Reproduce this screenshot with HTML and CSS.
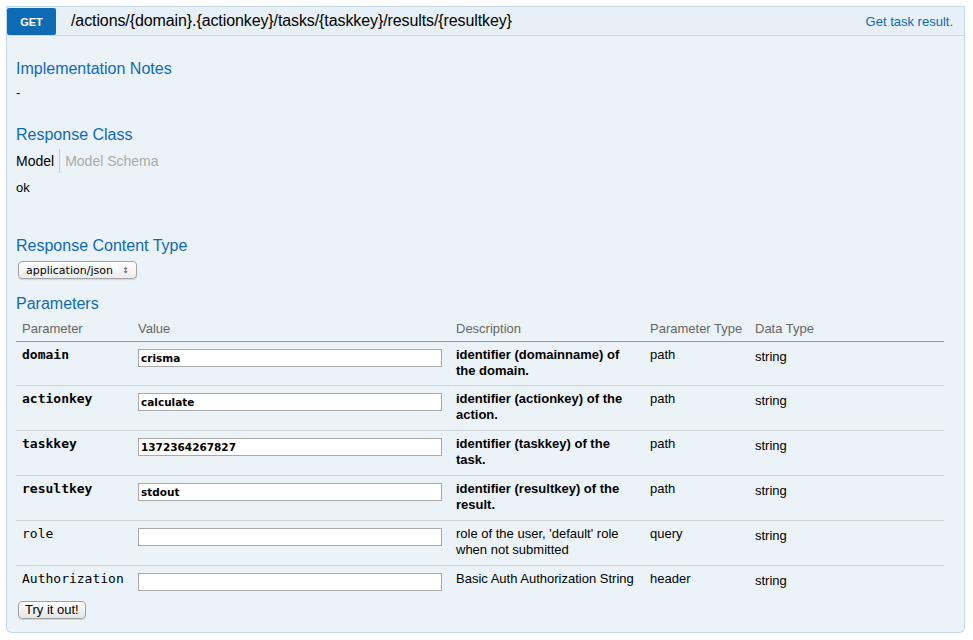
FILE: index.html
```html
<!DOCTYPE html>
<html>
<head>
<meta charset="utf-8">
<link rel="stylesheet" href="styles.css">
</head>
<body>
<div class="operation">
  <div class="heading">
    <span class="verb">GET</span>
    <span class="path">/actions/{domain}.{actionkey}/tasks/{taskkey}/results/{resultkey}</span>
    <span class="summary">Get task result.</span>
  </div>
  <div class="content">
    <h4 class="h-notes">Implementation Notes</h4>
    <p class="notes">-</p>
    <h4 class="h-class">Response Class</h4>
    <div class="tabs">
      <span class="tab active">Model</span>
      <span class="tab inactive">Model Schema</span>
    </div>
    <p class="model">ok</p>
    <h4 class="h-ctype">Response Content Type</h4>
    <div class="select"><span>application/json</span><span class="arrows">&#x2195;</span></div>
    <h4 class="h-params">Parameters</h4>
    <table class="params">
      <colgroup>
        <col class="c1"><col class="c2"><col class="c3"><col class="c4"><col class="c5">
      </colgroup>
      <thead>
        <tr><th>Parameter</th><th>Value</th><th>Description</th><th>Parameter Type</th><th>Data Type</th></tr>
      </thead>
      <tbody>
        <tr class="first">
          <td class="name req">domain</td>
          <td><div class="input">crisma</div></td>
          <td class="desc req">identifier (domainname) of the domain.</td>
          <td class="ptype">path</td>
          <td class="dtype">string</td>
        </tr>
        <tr>
          <td class="name req">actionkey</td>
          <td><div class="input">calculate</div></td>
          <td class="desc req">identifier (actionkey) of the action.</td>
          <td class="ptype">path</td>
          <td class="dtype">string</td>
        </tr>
        <tr>
          <td class="name req">taskkey</td>
          <td><div class="input">1372364267827</div></td>
          <td class="desc req">identifier (taskkey) of the task.</td>
          <td class="ptype">path</td>
          <td class="dtype">string</td>
        </tr>
        <tr>
          <td class="name req">resultkey</td>
          <td><div class="input">stdout</div></td>
          <td class="desc req">identifier (resultkey) of the result.</td>
          <td class="ptype">path</td>
          <td class="dtype">string</td>
        </tr>
        <tr>
          <td class="name">role</td>
          <td><div class="input"></div></td>
          <td class="desc">role of the user, 'default' role when not submitted</td>
          <td class="ptype">query</td>
          <td class="dtype">string</td>
        </tr>
        <tr class="last">
          <td class="name">Authorization</td>
          <td><div class="input"></div></td>
          <td class="desc">Basic Auth Authorization String</td>
          <td class="ptype">header</td>
          <td class="dtype">string</td>
        </tr>
      </tbody>
    </table>
    <div class="button">Try it out!</div>
  </div>
</div>
</body>
</html>
```

FILE: styles.css
```css
html, body {
  margin: 0;
  padding: 0;
  background: #ffffff;
}
body {
  font-family: "Liberation Sans", Arial, sans-serif;
  font-size: 13px;
  color: #000;
}
.operation {
  margin: 6px 8px 0 6px;
}
.heading {
  display: flex;
  align-items: center;
  height: 28px;
  background: #e7f0f7;
  border: 1px solid #c3d9ec;
}
.verb {
  width: 49px;
  height: 27px;
  margin-top: 1px;
  background: #0f6ab4;
  color: #fff;
  font-size: 11px;
  font-weight: bold;
  display: flex;
  align-items: center;
  justify-content: center;
  border-radius: 2px;
}
.path {
  margin-left: 15px;
  font-size: 16px;
  letter-spacing: -0.1px;
  flex: 1;
}
.summary {
  color: #0f6ab4;
  font-size: 13px;
  padding-right: 11px;
}
.content {
  background: #ebf3f9;
  border: 1px solid #c3d9ec;
  border-top: none;
  border-radius: 0 0 6px 6px;
  padding: 0 9px 13px 9px;
}
h4 {
  margin: 0;
  font-size: 16px;
  line-height: 20px;
  font-weight: normal;
  color: #0f6ab4;
}
p {
  margin: 0;
  line-height: 18px;
}
.h-notes { padding-top: 23px; }
.notes { margin-top: 5px; }
.h-class { margin-top: 23px; }
.tabs {
  display: flex;
  margin-top: 4px;
  height: 24px;
  align-items: center;
  font-size: 14px;
}
.tab {
  line-height: 18px;
}
.tab.active {
  padding-right: 5px;
  border-right: 1px solid #ccc;
  height: 24px;
  display: flex;
  align-items: center;
}
.tab.inactive {
  color: #aaa;
  padding-left: 5px;
}
.model { margin-top: 6px; }
.h-ctype { margin-top: 39px; }
.select {
  margin-top: 5px;
  margin-left: 2px;
  width: 110px;
  height: 16px;
  border: 1px solid #a5a5a5;
  border-radius: 4px;
  background: linear-gradient(#ffffff, #ececec);
  font-family: "DejaVu Sans", sans-serif;
  font-size: 11px;
  display: flex;
  align-items: center;
  justify-content: space-between;
  padding: 0 0 0 7px;
  box-shadow: 0 1px 1px rgba(0,0,0,0.12);
}
.select .arrows {
  font-size: 8px;
  margin-right: 7px;
  color: #444;
}
.h-params { margin-top: 15px; }
.params {
  border-collapse: collapse;
  width: 928px;
  table-layout: fixed;
}
.c1 { width: 116px; }
.c2 { width: 318px; }
.c3 { width: 194px; }
.c4 { width: 105px; }
.c5 { width: 195px; }
th {
  text-align: left;
  font-weight: normal;
  color: #666;
  font-size: 13px;
  line-height: 18px;
  padding: 6px 6px 3px 6px;
  border-bottom: 1px solid #999;
}
tbody tr {
  height: 45px;
}
tbody tr.first {
  height: 44px;
}
td {
  vertical-align: top;
  padding: 4px 6px 0 6px;
  line-height: 16px;
  font-size: 13px;
  border-bottom: 1px solid #cfd4d8;
}
tbody tr.last {
  height: 30px;
}
tr.last td {
  border-bottom: none;
}
td.name {
  font-family: "DejaVu Sans Mono", monospace;
  font-size: 13px;
  padding-top: 5px;
}
td.req {
  font-weight: bold;
}
td.desc {
  padding-top: 5px;
}
td.ptype {
  padding-top: 5px;
}
td.dtype {
  padding-top: 7px;
}
.input {
  width: 300px;
  height: 16px;
  margin-top: 3px;
  background: #fff;
  border: 1px solid #a9a9a9;
  font-family: "DejaVu Sans", sans-serif;
  font-size: 10.5px;
  font-weight: bold;
  line-height: 16px;
  padding-left: 2px;
}
.button {
  display: inline-block;
  margin-left: 2px;
  margin-top: 5px;
  padding: 0 6px;
  height: 16px;
  line-height: 16px;
  font-size: 13px;
  border: 1px solid #a0a0a0;
  border-radius: 4px;
  background: linear-gradient(#ffffff, #e6e6e6);
  box-shadow: 0 1px 1px rgba(0,0,0,0.12);
}
```
